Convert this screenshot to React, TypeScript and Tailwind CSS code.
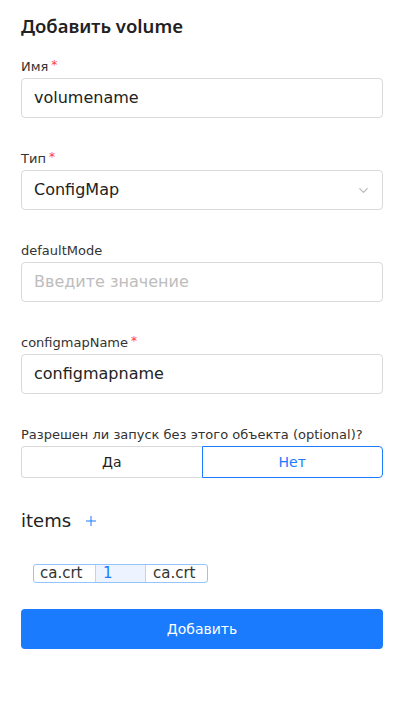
import React from 'react';
import { ChevronDown, Plus } from 'lucide-react';

const font = { fontFamily: '"DejaVu Sans", "Noto Sans", sans-serif' };
const titleFont = { fontFamily: '"Noto Sans", "DejaVu Sans", sans-serif' };

const Label = ({ text, required }: { text: string; required?: boolean }) => (
  <div className="mb-[3px] flex items-start text-[13px] leading-[16px] text-[#333]">
    <span>{text}</span>
    {required && <span className="ml-[3px] text-[12px] leading-[12px] text-[#ff3b30]">*</span>}
  </div>
);

const Field = ({ value, placeholder }: { value?: string; placeholder?: string }) => (
  <div className="flex h-[40px] items-center rounded-[4px] border border-[#d9d9d9] bg-white px-[12px] text-[16px]">
    {value ? <span className="text-[#222]">{value}</span> : <span className="text-[#bdbdbd]">{placeholder}</span>}
  </div>
);

export default function App() {
  return (
    <div className="min-h-[703px] w-[409px] bg-white pl-[21px] pr-[26px] pt-[13px]" style={font}>
      <h1 className="text-[18.5px] font-semibold leading-[26px] text-[#222]" style={titleFont}>
        Добавить volume
      </h1>

      <div className="mt-[20px]">
        <Label text="Имя" required />
        <Field value="volumename" />
      </div>

      <div className="mt-[33px]">
        <Label text="Тип" required />
        <div className="flex h-[40px] items-center justify-between rounded-[4px] border border-[#d9d9d9] bg-white pl-[12px] pr-[11px] text-[16px] text-[#222]">
          <span>ConfigMap</span>
          <ChevronDown className="h-[15px] w-[15px] text-[#bbbbbb]" strokeWidth={2} />
        </div>
      </div>

      <div className="mt-[33px]">
        <Label text="defaultMode" />
        <Field placeholder="Введите значение" />
      </div>

      <div className="mt-[33px]">
        <Label text="configmapName" required />
        <Field value="configmapname" />
      </div>

      <div className="mt-[33px]">
        <div className="mb-[3px] whitespace-nowrap text-[13px] leading-[16px] text-[#333]">Разрешен ли запуск без этого объекта (optional)?</div>
        <div className="flex h-[32px] text-[14px]">
          <button className="flex-1 rounded-l-[4px] border border-r-0 border-[#d9d9d9] text-[#222]">Да</button>
          <button className="flex-1 rounded-r-[4px] border border-[#1a7bff] text-[#1a7bff]">Нет</button>
        </div>
      </div>

      <div className="mt-[31px] flex items-center gap-[12px]">
        <span className="text-[18px] leading-[24px] text-[#222]">items</span>
        <Plus className="h-[16px] w-[16px] text-[#1a7bff]" strokeWidth={1.5} />
      </div>

      <div className="mt-[28px] pl-[12px]">
        <div className="inline-flex h-[19px] overflow-hidden rounded-[3px] border border-[#94c4ff] text-[15px] leading-[17px]">
          <span className="w-[62px] border-r border-[#b7d5fb] px-[6px] text-[#333]">ca.crt</span>
          <span className="w-[50px] border-r border-[#b7d5fb] bg-[#eef4ff] px-[7px] text-[#1a7bff]">1</span>
          <span className="w-[61px] px-[7px] text-[#333]">ca.crt</span>
        </div>
      </div>

      <button className="mt-[24px] flex h-[40px] w-full items-center justify-center rounded-[4px] bg-[#1a7bff] text-[14px] text-white">
        Добавить
      </button>
    </div>
  );
}
